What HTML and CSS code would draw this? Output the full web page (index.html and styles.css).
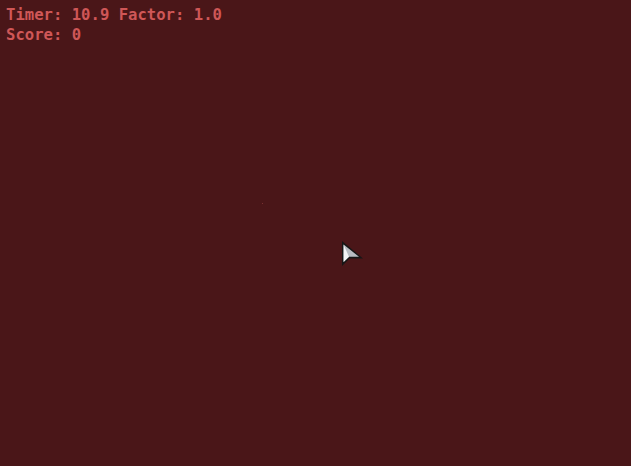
FILE: index.html
```html
<!DOCTYPE html>
<html>
<head>
<meta charset="utf-8">
<link rel="stylesheet" href="styles.css">
</head>
<body>
<div class="hud">
  <div class="line">Timer: 10.9 Factor: 1.0</div>
  <div class="line">Score: 0</div>
</div>
<div class="dot"></div>
<svg class="cursor" width="24" height="30" viewBox="0 0 24 30">
  <path d="M1 1 L1 26 L8.5 18.5 L22 18.5 Z" fill="#161616"/>
  <path d="M2.6 4.5 L2.6 22 L8 16.8 L18 16.8 Z" fill="#b8bcc2"/>
  <path d="M2.6 4.5 L2.6 22 L8 16.8 Z" fill="#f2f4f6"/>
</svg>
</body>
</html>
```

FILE: styles.css
```css
html, body {
  margin: 0;
  padding: 0;
  width: 631px;
  height: 466px;
  background: #4a1618;
  overflow: hidden;
}
.hud {
  padding: 5px 0 0 6px;
  font-family: "DejaVu Sans Mono", monospace;
  font-weight: bold;
  font-size: 15.6px;
  line-height: 20px;
  color: #cf5757;
}
.dot {
  position: absolute;
  left: 262px;
  top: 203px;
  width: 1px;
  height: 1px;
  background: #7a3030;
}
.cursor {
  position: absolute;
  left: 341px;
  top: 240px;
}
```
